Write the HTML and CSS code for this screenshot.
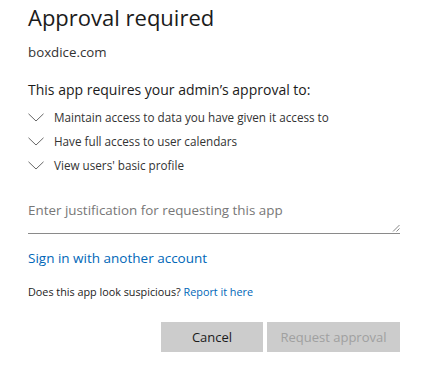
FILE: index.html
```html
<!DOCTYPE html>
<html>
<head>
<meta charset="utf-8">
<link rel="stylesheet" href="styles.css">
</head>
<body>
<div class="dialog">
  <h1 class="title">Approval required</h1>
  <div class="domain">boxdice.com</div>
  <div class="intro">This app requires your admin’s approval to:</div>
  <ul class="perms">
    <li><svg class="chev" width="16" height="9" viewBox="0 0 16 9"><path d="M0.5 0.8 L8 8 L15.5 0.8" fill="none" stroke="#666" stroke-width="1"/></svg><span>Maintain access to data you have given it access to</span></li>
    <li><svg class="chev" width="16" height="9" viewBox="0 0 16 9"><path d="M0.5 0.8 L8 8 L15.5 0.8" fill="none" stroke="#666" stroke-width="1"/></svg><span>Have full access to user calendars</span></li>
    <li><svg class="chev" width="16" height="9" viewBox="0 0 16 9"><path d="M0.5 0.8 L8 8 L15.5 0.8" fill="none" stroke="#666" stroke-width="1"/></svg><span>View users' basic profile</span></li>
  </ul>
  <div class="field">
    <span class="placeholder">Enter justification for requesting this app</span>
    <svg class="grip" width="8" height="8" viewBox="0 0 8 8"><path d="M1 7.5 L7.5 1 M4.5 7.5 L7.5 4.5" stroke="#888" stroke-width="1" fill="none"/></svg>
  </div>
  <a class="signin">Sign in with another account</a>
  <div class="suspicious">Does this app look suspicious? <a class="report">Report it here</a></div>
  <div class="buttons">
    <button class="btn cancel">Cancel</button>
    <button class="btn request">Request approval</button>
  </div>
</div>
</body>
</html>
```
FILE: styles.css
```css
html, body {
  margin: 0;
  padding: 0;
  background: #fff;
}
body {
  font-family: "Open Sans", "Noto Sans", sans-serif;
  color: #1b1b1b;
}
.dialog {
  width: 372px;
  padding: 0 0 0 28px;
}
.title {
  margin: 0;
  padding-top: 3px;
  font-size: 22px;
  font-weight: 400;
  line-height: 28px;
  color: #1b1b1b;
}
.domain {
  margin-top: 12px;
  font-size: 13.3px;
  line-height: 18px;
  color: #333;
}
.intro {
  margin-top: 20px;
  font-size: 14px;
  line-height: 18px;
  color: #1b1b1b;
}
.perms {
  list-style: none;
  margin: 6px 0 0;
  padding: 0;
}
.perms li {
  display: flex;
  align-items: center;
  height: 24px;
  font-size: 11.7px;
  color: #333;
}
.chev {
  margin-right: 10px;
  flex: none;
}
.field {
  margin-top: 20px;
  height: 36px;
  border-bottom: 1px solid #8a8a8a;
  position: relative;
}
.placeholder {
  display: block;
  padding-top: 4px;
  font-size: 13.4px;
  line-height: 18px;
  color: #777;
}
.grip {
  position: absolute;
  right: 0;
  bottom: 1px;
}
.signin {
  display: block;
  margin-top: 14px;
  font-size: 13.5px;
  line-height: 20px;
  color: #0067b8;
}
.suspicious {
  margin-top: 17px;
  font-size: 10.8px;
  line-height: 14px;
  color: #1b1b1b;
}
.report {
  color: #0067b8;
}
.buttons {
  display: flex;
  justify-content: flex-end;
  gap: 4px;
  margin-top: 23px;
}
.btn {
  height: 30px;
  border: none;
  background: #cccccc;
  font-family: inherit;
  font-size: 13px;
  padding: 0;
}
.cancel {
  width: 102px;
  color: #1b1b1b;
}
.request {
  width: 133px;
  color: #a0a0a0;
}
```
